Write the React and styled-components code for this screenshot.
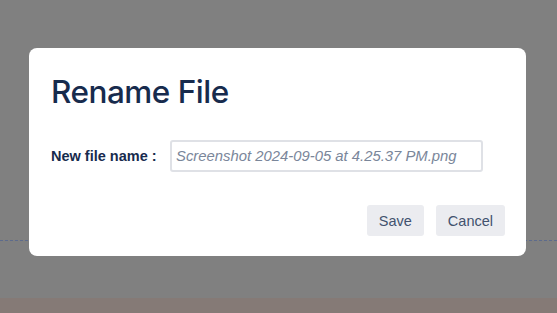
import styled, { createGlobalStyle } from 'styled-components';

const GlobalStyle = createGlobalStyle`
    html, body {
        margin: 0;
        padding: 0;
    }
    body {
        font-family: "Liberation Sans", Arial, sans-serif;
        background: #808080;
    }
`;

const Page = styled.div`
    height: 313px;
    display: flex;
    flex-direction: column;
    background: #808080;
`;

const Content = styled.div`
    flex: 1;
    display: flex;
    flex-direction: column;
`;

const DashedLine = styled.div`
    margin-top: 240px;
    border-top: 1px dashed #5d6b8c;
`;

const Footer = styled.div`
    height: 15px;
    background: #857a76;
`;

const Overlay = styled.div`
    position: fixed;
    inset: 0;
    display: flex;
    align-items: flex-start;
    justify-content: center;
    padding-top: 48px;
`;

const Dialog = styled.div`
    width: 497px;
    height: 208px;
    box-sizing: border-box;
    margin-right: 2px;
    background: #ffffff;
    border-radius: 8px;
    padding: 22px 21px 20px 22px;
    display: flex;
    flex-direction: column;
`;

const Title = styled.h1`
    margin: 0;
    font-family: Inter, "Noto Sans", sans-serif;
    font-size: 31.5px;
    font-weight: 500;
    line-height: 44px;
    letter-spacing: -0.5px;
    color: #172b4d;
`;

const Field = styled.div`
    display: flex;
    align-items: center;
    margin-top: 26px;
`;

const Label = styled.label`
    width: 119px;
    font-size: 14.5px;
    font-weight: bold;
    color: #172b4d;
    white-space: nowrap;
`;

const Input = styled.input`
    width: 313px;
    height: 32px;
    box-sizing: border-box;
    border: 2px solid #dfe1e6;
    border-radius: 3px;
    padding: 0 4px;
    font-family: "Liberation Sans", Arial, sans-serif;
    font-size: 14.85px;
    color: #172b4d;
    &::placeholder {
        color: #7a869a;
        font-style: italic;
    }
    &:focus {
        outline: none;
    }
`;

const Actions = styled.div`
    margin-top: auto;
    display: flex;
    justify-content: flex-end;
    gap: 12px;
`;

const Button = styled.button`
    height: 31px;
    padding: 0 12px;
    border: none;
    border-radius: 3px;
    background: #ebecf0;
    color: #42526e;
    font-family: "Liberation Sans", Arial, sans-serif;
    font-size: 14.5px;
    cursor: pointer;
`;

const App = () => {
    return (
        <>
            <GlobalStyle />
            <Page>
                <Content>
                    <DashedLine />
                </Content>
                <Footer />
            </Page>
            <Overlay>
                <Dialog>
                    <Title>Rename File</Title>
                    <Field>
                        <Label htmlFor="file-name">New file name :</Label>
                        <Input id="file-name" type="text" placeholder="Screenshot 2024-09-05 at 4.25.37 PM.png" />
                    </Field>
                    <Actions>
                        <Button type="button">Save</Button>
                        <Button type="button">Cancel</Button>
                    </Actions>
                </Dialog>
            </Overlay>
        </>
    );
};

export default App;
